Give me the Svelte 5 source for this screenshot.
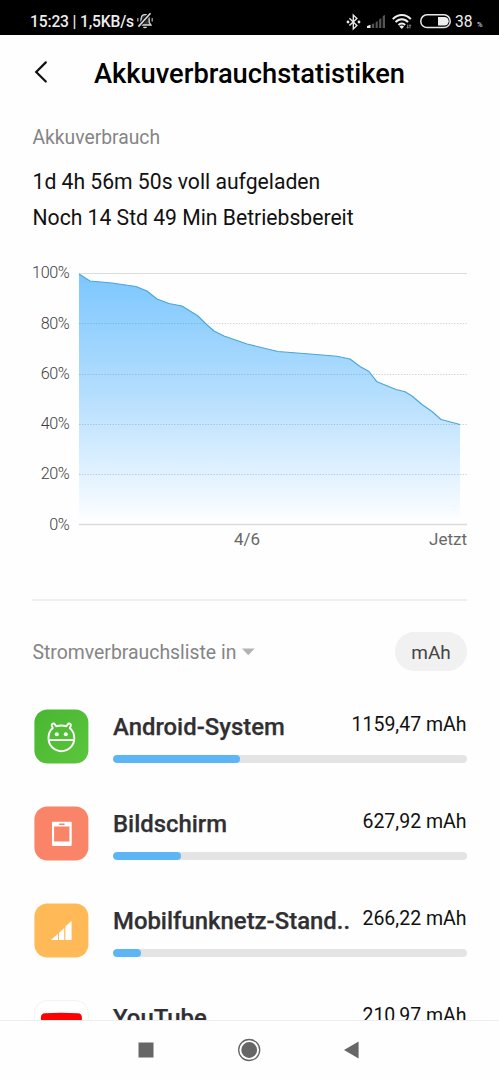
<script>
  const levels = [100, 80, 60, 40, 20, 0];
  const yFor = (level) => 18.5 + (100 - level) * 2.513;
  const line =
    'M79 19 L90 26 L112 28 L136 31.5 L147 36 L157 44 L169 48.5 L182 51 L198 61 L206 69 L214 76 L224 81 L247 89 L278 96.5 L310 99 L337 101.3 L350 104 L360 111.5 L369 116.5 L377 126.8 L396 134.5 L405 136.8 L412 141 L422 149.5 L432 156.5 L441 164.5 L460 169.5';

  const apps = [
    { name: 'Android-System', usage: '1159,47 mAh', share: 36, icon: 'android' },
    { name: 'Bildschirm', usage: '627,92 mAh', share: 19.1, icon: 'screen' },
    { name: 'Mobilfunknetz-Stand..', usage: '266,22 mAh', share: 8, icon: 'signal' },
    { name: 'YouTube', usage: '210,97 mAh', share: 6.5, icon: 'youtube' }
  ];
</script>

<div class="page">
  <div class="status">
    <span class="clock">15:23 | 1,5KB/s</span>
    <svg class="bell" width="18" height="18" viewBox="0 0 18 18" fill="none" stroke="#ddd" stroke-width="1.3">
      <path d="M3 13h12l-1.8-2.7V7.2C13 3.8 11 2.6 9 2.6S5.2 3.8 5 7.2v3.1z" fill="#333" />
      <path d="M7.5 14.8c.7 1 2.3 1 3 0" />
      <path d="M1.8 9.5V6M16.2 9.5V6" stroke="#aaa" />
      <path d="M14.5 1L2 15" stroke="#000" stroke-width="3.4" />
      <path d="M14.5 1.2L2.4 14.6" stroke-width="1.6" />
    </svg>
    <svg class="bt" width="15" height="18" viewBox="0 0 15 18" fill="none" stroke="#e8e8e8" stroke-width="1.4">
      <path d="M3.4 5.2l7.5 7.2-3.6 3.5V2l3.6 3.4-7.5 7.2" />
      <circle cx="2" cy="9" r=".7" fill="#e8e8e8" /><circle cx="13" cy="9" r=".7" fill="#e8e8e8" />
    </svg>
    <svg class="cell" width="19" height="14" viewBox="0 0 19 14" fill="#555">
      <path d="M0 13V11L3.5 9.8V13z" fill="#eee" />
      <path d="M4.8 13V9.3L7.2 8.3V13zM8.6 13V7.3L10.8 6V13zM12.1 13V4.6L14.3 3V13zM15.7 13V1L18 0V13z" />
    </svg>
    <svg class="wifi" width="20" height="17" viewBox="0 0 20 17" fill="none" stroke="#eee" stroke-width="2">
      <path d="M.8 6.2C5.8 .6 14 .6 18.8 6.2M3.6 9.2c3.4-3.8 9-3.8 12.4 0M6.5 12c1.9-2.1 4.8-2.1 6.6 0" />
      <path d="M7.4 13.4L9.8 15.9l2.2-2.4c-1.3-1.3-3.3-1.3-4.6-.1z" fill="#eee" stroke="none" />
      <path d="M15.7 11.6v3.6m-1-1l1 1 1-1M18 15.4v-3.6m-1 1l1-1 1 1" stroke="#aaa" stroke-width=".8" />
    </svg>
    <svg class="battery" width="32" height="15" viewBox="0 0 32 15">
      <rect x=".8" y=".8" width="29.4" height="12.8" rx="6.2" fill="none" stroke="#e8e8e8" stroke-width="1.5" />
      <path d="M18 3h6.5a4.2 4.2 0 0 1 0 8.4H18z" fill="#eee" />
    </svg>
    <span class="level">38</span><span class="percent">%</span>
  </div>

  <header>
    <svg width="14" height="24" viewBox="0 0 14 24" fill="none" stroke="#111" stroke-width="2.2" stroke-linecap="round">
      <path d="M11.8 2.4L2.2 12l9.6 9.5" />
    </svg>
    <h1>Akkuverbrauchstatistiken</h1>
  </header>

  <section class="summary">
    <div class="caption">Akkuverbrauch</div>
    <div class="full">1d 4h 56m 50s voll aufgeladen</div>
    <div class="left">Noch 14 Std 49 Min Betriebsbereit</div>
  </section>

  <svg class="chart" width="499" height="305" viewBox="0 0 499 305">
    <defs>
      <linearGradient id="fill" x1="0" y1="19" x2="0" y2="270" gradientUnits="userSpaceOnUse">
        <stop offset="0" stop-color="#7cc7fe" />
        <stop offset=".5" stop-color="#b7dffe" />
        <stop offset="1" stop-color="#ffffff" />
      </linearGradient>
    </defs>
    <path d="{line} V269 H79Z" fill="url(#fill)" />
    {#each levels as level}
      {@const solid = level === 100 || level === 0}
      <path
        d="M79 {Math.floor(yFor(level)) + 0.5}H467"
        stroke={solid ? '#dadcde' : '#55779a'}
        stroke-opacity={solid ? 1 : 0.3}
        stroke-width={level === 0 ? 1.5 : 1}
        stroke-dasharray={solid ? null : '1.4 1.4'}
      />
      <text class="tick" x="69.4" y={yFor(level) + 4.8} text-anchor="end">{level}%</text>
    {/each}
    <path d={line} fill="none" stroke="#4aa5d8" stroke-width="1.1" stroke-linejoin="round" />
    <text x="247" y="290.4" text-anchor="middle">4/6</text>
    <text x="467" y="290.4" text-anchor="end">Jetzt</text>
  </svg>

  <div class="divider"></div>

  <div class="filter">
    <span class="sort">Stromverbrauchsliste in</span>
    <svg width="13" height="8" viewBox="0 0 13 8"><path d="M0 .5h12.6L6.3 7.3z" fill="#b3b3b3" /></svg>
    <span class="unit">mAh</span>
  </div>

  <main>
    {#each apps as app}
      <article>
        <svg class="icon" width="56" height="56" viewBox="-0.4 -0.5 56 56">
          {#if app.icon === 'android'}
            <defs>
              <linearGradient id="green" x1="0" y1="0" x2="1" y2="1">
                <stop offset="0" stop-color="#49b632" />
                <stop offset="1" stop-color="#5bc63c" />
              </linearGradient>
            </defs>
            <rect width="54" height="54" rx="13" fill="url(#green)" />
            <g fill="none" stroke="#fff" stroke-width="1.9" stroke-linecap="round" stroke-linejoin="round">
              <path d="M18.4 18.6l-1-2.2c-.6-2.2 2-3.2 3.1-1.5l1.3 1.9c3.2-1 7-1 10.2 0l1.3-1.9c1.1-1.7 3.7-.7 3.1 1.5l-1 2.2c2.9 2.4 4.5 6 4.5 10.2a12.9 12.9 0 0 1-25.8 0c0-4.2 1.4-7.8 4.3-10.2zM14.3 30.6h25.2" />
            </g>
            <g fill="#fff"><circle cx="22.4" cy="24.8" r="2" /><circle cx="31.4" cy="24.8" r="2" /></g>
          {:else if app.icon === 'screen'}
            <rect width="54" height="54" rx="13" fill="#fa8468" />
            <path d="M18.5 15.3h17.8a1 1 0 0 1 1 1v21.9a1.2 1.2 0 0 1-1.2 1.2H18.8a1.2 1.2 0 0 1-1.2-1.2V16.3a1 1 0 0 1 .9-1zM19.7 20v15H35V20zM24.7 17v1.6h5.5V17z" fill="#fff" fill-rule="evenodd" />
          {:else if app.icon === 'signal'}
            <rect width="54" height="54" rx="13" fill="#ffb957" />
            <path d="M16.5 36.6l7.1-6.3v6.3zM24.6 36.6v-7.2l5.2-5v12.2zM31 36.6V23l6.2-5.8v19.4z" fill="#fff" />
          {:else}
            <rect width="54" height="54" rx="13" fill="#fff" stroke="#f2f2f2" />
            <path d="M6.5 17q0-4 4-4.2 16-1 33 0 4 .2 4 4.2v18q0 4-4 4.4-16 1.5-33 0-4-.4-4-4z" fill="#f00" />
            <path d="M23 21v12l10-6z" fill="#fff" />
          {/if}
        </svg>
        <div class="details">
          <div class="labels">
            <span class="name">{app.name}</span>
            <span class="usage">{app.usage}</span>
          </div>
          <div class="track"><div class="bar" style="width: {app.share}%"></div></div>
        </div>
      </article>
    {/each}
  </main>

  <nav>
    <svg width="499" height="59" viewBox="0 0 499 59" fill="#666">
      <path d="M138.5 21.5h15v15h-15zM344 29l14.6-8.5v17z" />
      <circle cx="249.2" cy="29" r="7.9" />
      <circle cx="249.2" cy="29" r="10.5" fill="none" stroke="#666" stroke-width="1.3" />
    </svg>
  </nav>
</div>

<style>
  :global(body) { margin: 0; background: #fff; }
  .page { width: 499px; height: 1080px; overflow: hidden; display: flex; flex-direction: column; background: #fefefe; font-family: Roboto, sans-serif; color: #111; }
  svg { display: block; flex: none; }
  .status { height: 35px; flex: none; box-sizing: border-box; padding: 9px 0 0 30px; display: flex; align-items: center; background: #000; color: #eee; white-space: nowrap; }
  .status svg { margin-top: -1px; }
  .clock { width: 106px; font-size: 15.6px; font-weight: 500; letter-spacing: -0.15px; }
  .status .bell { margin-top: -3px; }
  .bt { margin-left: 192px; }
  .cell { margin-left: 6px; }
  .wifi { margin-left: 6px; }
  .battery { margin-left: 8px; }
  .level { width: 22px; margin-left: 3px; font-size: 15.6px; }
  .percent { font-size: 7.5px; padding-top: 4px; }
  header { height: 75px; flex: none; display: flex; align-items: center; padding-left: 34px; }
  header svg { margin-top: -1px; }
  h1 { margin: 2px 0 0 46px; font-size: 27.3px; font-weight: 500; line-height: 36px; color: #000; white-space: nowrap; }
  .summary { height: 145px; flex: none; padding: 10px 32.5px 0; box-sizing: border-box; display: flex; flex-direction: column; font-size: 21.15px; line-height: 36px; white-space: nowrap; }
  .caption { color: #858585; margin-bottom: 8px; font-size: 19.3px; }
  .chart text { font-size: 17px; fill: #686868; }
  .chart .tick { font-size: 16.2px; letter-spacing: -0.4px; font-weight: 300; fill: #404040; }
  .divider { height: 2px; margin: 39px 32px 0; flex: none; background: #efefef; }
  .filter { height: 100px; flex: none; box-sizing: border-box; padding: 1px 32px 0 32.5px; display: flex; align-items: center; font-size: 19.4px; color: #858585; white-space: nowrap; }
  .sort { width: 209.5px; padding-top: 2px; }
  .unit { margin-left: auto; width: 72px; height: 39px; line-height: 41px; border-radius: 20px; text-align: center; background: #f1f1f1; color: #444; font-size: 19px; }
  main { flex: 1; min-height: 0; overflow: hidden; padding: 0 32.5px 0 34px; }
  article { height: 97px; box-sizing: border-box; padding-top: 8px; display: flex; gap: 23px; }
  .details { flex: 1; min-width: 0; }
  .labels { height: 46px; display: flex; justify-content: space-between; white-space: nowrap; }
  .name { font-size: 23.9px; line-height: 36px; font-weight: 500; color: #303033; -webkit-text-stroke: 0.25px #303033; }
  .usage { font-size: 19.5px; line-height: 31px; }
  .track { height: 8px; border-radius: 4px; background: #e4e4e4; overflow: hidden; }
  .bar { height: 8px; border-radius: 4px; background: #5cb5f5; }
  nav { height: 60px; flex: none; border-top: 1px solid #eee; box-sizing: border-box; background: #fefefe; }
</style>
